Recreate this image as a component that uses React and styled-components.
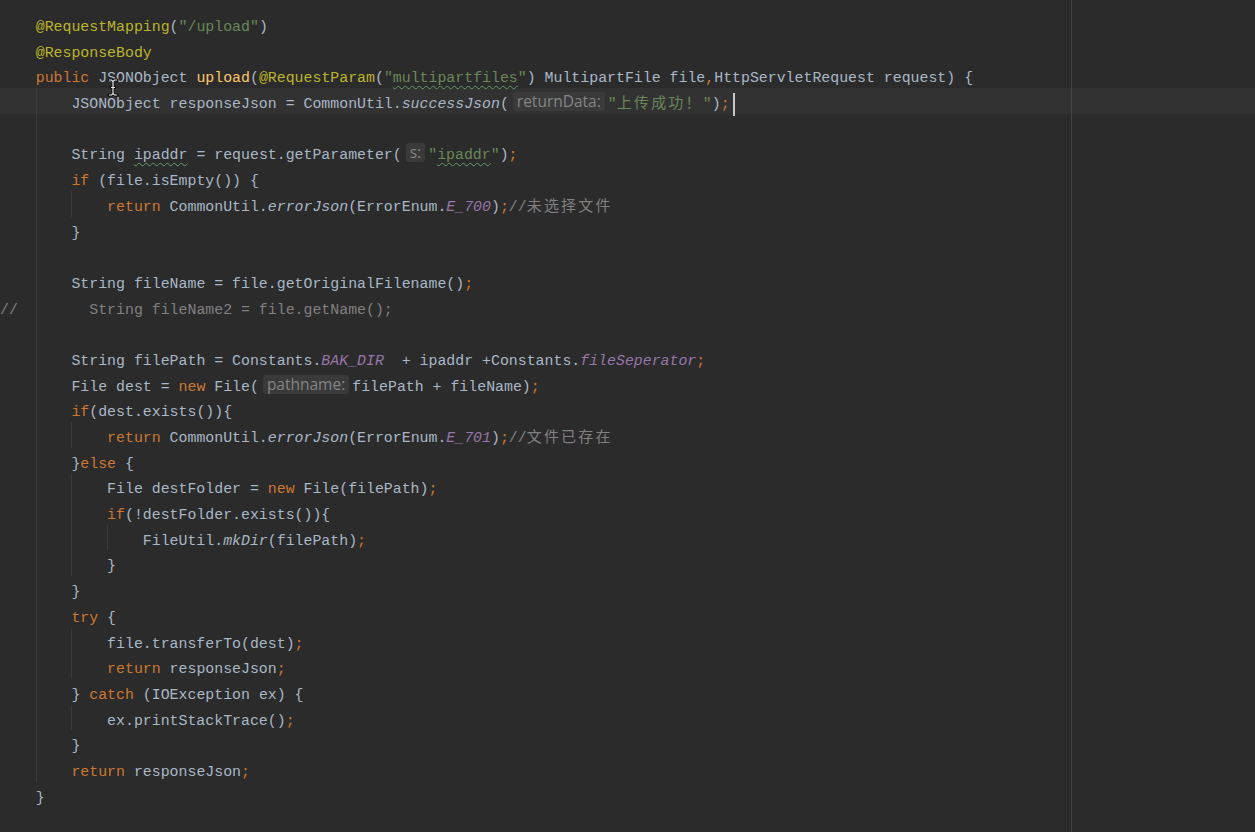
import React from 'react';
import styled, { createGlobalStyle, css } from 'styled-components';

const Global = createGlobalStyle`
  html, body {
    margin: 0;
    padding: 0;
    background: #2b2b2b;
  }
`;

const Editor = styled.div`
  position: relative;
  height: 832px;
  overflow: hidden;
  background: #2b2b2b;
  font-family: "Liberation Mono", "Noto Sans CJK SC", monospace;
  font-size: 14.88px;
  color: #a9b7c6;

  &::after {
    content: '';
    position: absolute;
    top: 0;
    bottom: 0;
    left: 120ch;
    width: 1px;
    background: #444444;
    pointer-events: none;
  }
`;

const Code = styled.div`
  padding-top: 11px;
`;

const Line = styled.div`
  display: flex;
  height: 25.7px;
  line-height: 25.7px;
  background: ${p => (p.$current ? '#323232' : 'transparent')};
`;

const Indent = styled.span`
  flex: none;
  box-sizing: border-box;
  width: 4ch;
  padding-top: 4px;
  white-space: pre;
  box-shadow: ${p => (p.$guide ? 'inset 1px 0 0 #3a3a3a' : 'none')};
`;

const Content = styled.span`
  flex: none;
  white-space: pre;
  padding-top: 4px;
`;

const palette = {
  p: css`color: #a9b7c6;`,
  kw: css`color: #cc7832;`,
  sep: css`color: #cc7832;`,
  ann: css`color: #bbb529;`,
  str: css`color: #6a8759;`,
  fn: css`color: #ffc66d;`,
  st: css`color: #a9b7c6; font-style: italic;`,
  cst: css`color: #9876aa; font-style: italic;`,
  cm: css`color: #808080;`,
};

const Tok = styled.span`
  ${p => palette[p.$kind]}
  ${p =>
    p.$typo &&
    css`
      text-decoration-line: underline;
      text-decoration-style: wavy;
      text-decoration-color: #659c6b;
      text-decoration-thickness: 1px;
      text-underline-offset: 3px;
    `}
`;

const Cjk = styled.span`
  font-family: "Noto Sans CJK SC", sans-serif;
  font-size: 15px;
  line-height: 1;
  letter-spacing: 2.2px;
  ${p => palette[p.$kind]}
`;

const Hint = styled.span`
  display: inline-block;
  height: 19px;
  line-height: 19px;
  margin: 0 3px 0 4px;
  padding: 0 4px;
  border-radius: 3px;
  background: #3a3a3a;
  color: #858585;
  font-family: "Open Sans", sans-serif;
  font-size: 15.5px;
  vertical-align: 1px;
`;

const Caret = styled.span`
  display: inline-block;
  width: 2px;
  height: 23px;
  margin-left: 3px;
  background: #c8c8c8;
  vertical-align: middle;
`;

const Pointer = styled.svg`
  position: absolute;
  left: 107px;
  top: 78px;
  pointer-events: none;
`;

const T = (kind, text, typo) => ({ kind, text, typo });
const H = text => ({ hint: text });
const C = (kind, text) => ({ cjk: text, kind });

const lines = [
  { ind: 1, g: [], t: [T('ann', '@RequestMapping'), T('p', '('), T('str', '"/upload"'), T('p', ')')] },
  { ind: 1, g: [], t: [T('ann', '@ResponseBody')] },
  {
    ind: 1, g: [], t: [
      T('kw', 'public'), T('p', ' JSONObject '), T('fn', 'upload'), T('p', '('),
      T('ann', '@RequestParam'), T('p', '('), T('str', '"'), T('str', 'multipartfiles', true),
      T('str', '"'), T('p', ') MultipartFile file'), T('sep', ','), T('p', 'HttpServletRequest request) {'),
    ],
  },
  {
    ind: 2, g: [1], current: true, caret: true, t: [
      T('p', 'JSONObject responseJson = CommonUtil.'), T('st', 'successJson'), T('p', '('),
      H('returnData:'), T('str', '"'), C('str', '上传成功！'), T('str', '"'), T('p', ')'), T('sep', ';'),
    ],
  },
  { ind: 2, g: [1], t: [] },
  {
    ind: 2, g: [1], t: [
      T('p', 'String '), T('p', 'ipaddr', true), T('p', ' = request.getParameter('), H('s:'),
      T('str', '"'), T('str', 'ipaddr', true), T('str', '"'), T('p', ')'), T('sep', ';'),
    ],
  },
  { ind: 2, g: [1], t: [T('kw', 'if'), T('p', ' (file.isEmpty()) {')] },
  {
    ind: 3, g: [1, 2], t: [
      T('kw', 'return'), T('p', ' CommonUtil.'), T('st', 'errorJson'), T('p', '(ErrorEnum.'),
      T('cst', 'E_700'), T('p', ')'), T('sep', ';'), T('cm', '//'), C('cm', '未选择文件'),
    ],
  },
  { ind: 2, g: [1], t: [T('p', '}')] },
  { ind: 2, g: [1], t: [] },
  { ind: 2, g: [1], t: [T('p', 'String fileName = file.getOriginalFilename()'), T('sep', ';')] },
  { comment: true },
  { ind: 2, g: [1], t: [] },
  {
    ind: 2, g: [1], t: [
      T('p', 'String filePath = Constants.'), T('cst', 'BAK_DIR'), T('p', '  + ipaddr +Constants.'),
      T('cst', 'fileSeperator'), T('sep', ';'),
    ],
  },
  {
    ind: 2, g: [1], t: [
      T('p', 'File dest = '), T('kw', 'new'), T('p', ' File('), H('pathname:'),
      T('p', 'filePath + fileName)'), T('sep', ';'),
    ],
  },
  { ind: 2, g: [1], t: [T('kw', 'if'), T('p', '(dest.exists()){')] },
  {
    ind: 3, g: [1, 2], t: [
      T('kw', 'return'), T('p', ' CommonUtil.'), T('st', 'errorJson'), T('p', '(ErrorEnum.'),
      T('cst', 'E_701'), T('p', ')'), T('sep', ';'), T('cm', '//'), C('cm', '文件已存在'),
    ],
  },
  { ind: 2, g: [1], t: [T('p', '}'), T('kw', 'else'), T('p', ' {')] },
  { ind: 3, g: [1, 2], t: [T('p', 'File destFolder = '), T('kw', 'new'), T('p', ' File(filePath)'), T('sep', ';')] },
  { ind: 3, g: [1, 2], t: [T('kw', 'if'), T('p', '(!destFolder.exists()){')] },
  { ind: 4, g: [1, 2, 3], t: [T('p', 'FileUtil.'), T('st', 'mkDir'), T('p', '(filePath)'), T('sep', ';')] },
  { ind: 3, g: [1, 2], t: [T('p', '}')] },
  { ind: 2, g: [1], t: [T('p', '}')] },
  { ind: 2, g: [1], t: [T('kw', 'try'), T('p', ' {')] },
  { ind: 3, g: [1, 2], t: [T('p', 'file.transferTo(dest)'), T('sep', ';')] },
  { ind: 3, g: [1, 2], t: [T('kw', 'return'), T('p', ' responseJson'), T('sep', ';')] },
  { ind: 2, g: [1], t: [T('p', '} '), T('kw', 'catch'), T('p', ' (IOException ex) {')] },
  { ind: 3, g: [1, 2], t: [T('p', 'ex.printStackTrace()'), T('sep', ';')] },
  { ind: 2, g: [1], t: [T('p', '}')] },
  { ind: 2, g: [1], t: [T('kw', 'return'), T('p', ' responseJson'), T('sep', ';')] },
  { ind: 1, g: [], t: [T('p', '}')] },
];

function Token({ tok }) {
  if (tok.hint) return <Hint>{tok.hint}</Hint>;
  if (tok.cjk) return <Cjk $kind={tok.kind}>{tok.cjk}</Cjk>;
  return (
    <Tok $kind={tok.kind} $typo={tok.typo}>
      {tok.text}
    </Tok>
  );
}

function CodeLine({ line }) {
  if (line.comment) {
    return (
      <Line>
        <Indent><Tok $kind="cm">{'//  '}</Tok></Indent>
        <Indent $guide><Tok $kind="cm">{'    '}</Tok></Indent>
        <Content>
          <Tok $kind="cm">{'  String fileName2 = file.getName();'}</Tok>
        </Content>
      </Line>
    );
  }
  const segs = [];
  for (let i = 0; i < line.ind; i++) {
    segs.push(<Indent key={i} $guide={line.g.includes(i)} />);
  }
  return (
    <Line $current={line.current}>
      {segs}
      <Content>
        {line.t.map((tok, i) => (
          <Token key={i} tok={tok} />
        ))}
        {line.caret && <Caret />}
      </Content>
    </Line>
  );
}

export default function App() {
  return (
    <Editor>
      <Global />
      <Code>
        {lines.map((line, i) => (
          <CodeLine key={i} line={line} />
        ))}
      </Code>
      <Pointer width="12" height="19" viewBox="0 0 12 19">
        <path
          d="M2 2 H4.5 L6 3.5 L7.5 2 H10 M6 3.5 V15.5 M2 17 H4.5 L6 15.5 L7.5 17 H10 M4 9.5 H8"
          fill="none"
          stroke="#111"
          strokeWidth="3"
          strokeLinecap="round"
        />
        <path
          d="M2 2 H4.5 L6 3.5 L7.5 2 H10 M6 3.5 V15.5 M2 17 H4.5 L6 15.5 L7.5 17 H10 M4 9.5 H8"
          fill="none"
          stroke="#e6e6e6"
          strokeWidth="1.2"
        />
      </Pointer>
    </Editor>
  );
}
